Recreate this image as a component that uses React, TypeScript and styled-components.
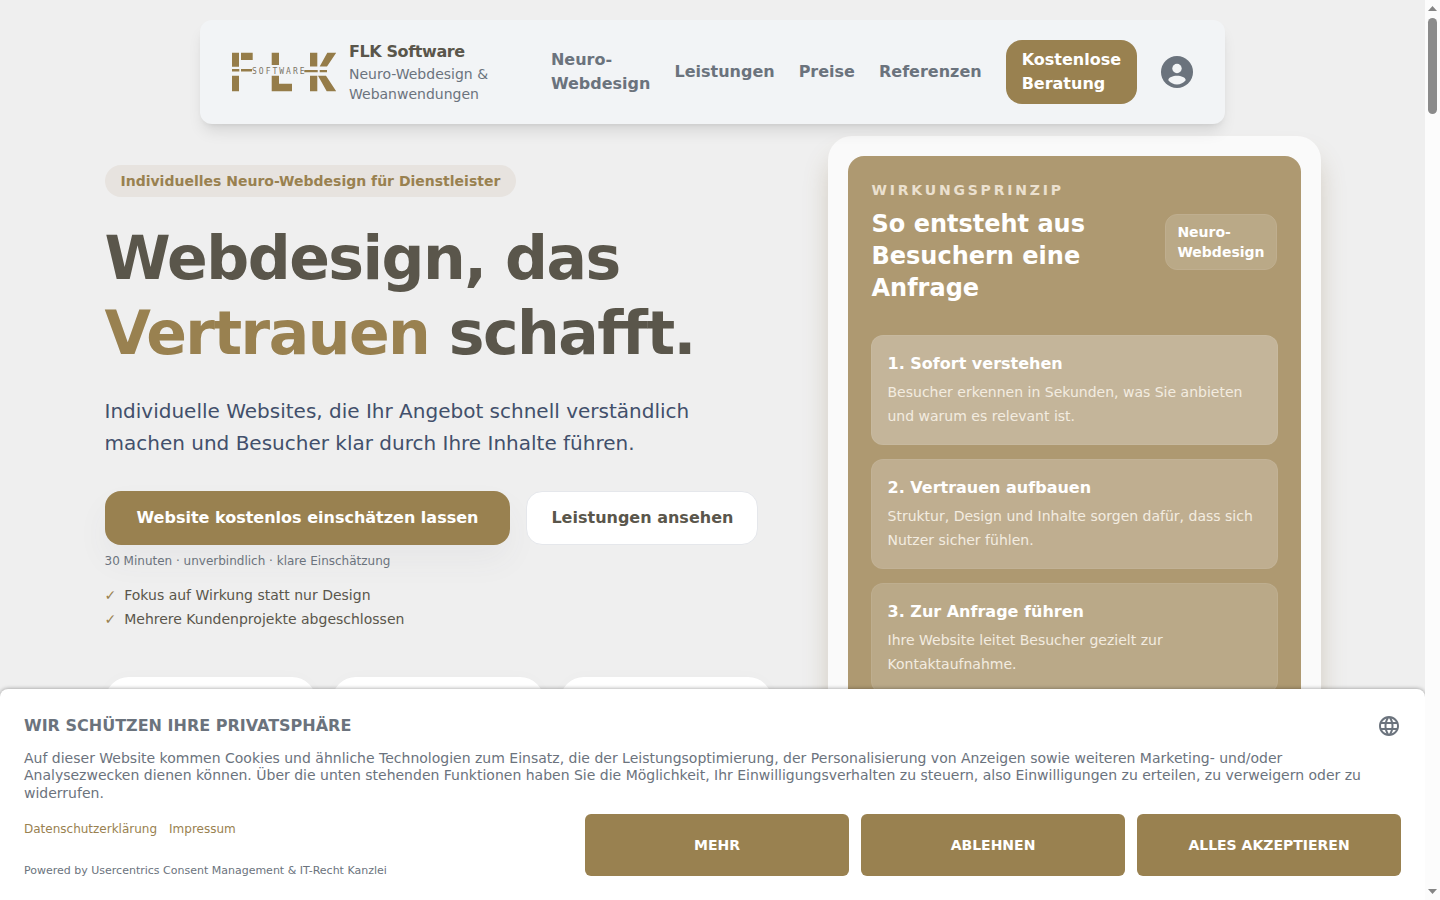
import React from "react";
import styled, { createGlobalStyle, css } from "styled-components";
import { MdLanguage } from "react-icons/md";

const gold = "#998150";
const ink = "#5a564b";
const slate = "#6b737d";

const GlobalStyle = createGlobalStyle`
  *, *::before, *::after { box-sizing: border-box; }
  body {
    margin: 0;
    background: #efefef;
    color: ${ink};
    font-family: "DejaVu Sans", sans-serif;
    font-size: 16px;
    line-height: 24px;
  }
  h1, h2, h3, p, ul { margin: 0; padding: 0; }
  a { color: inherit; text-decoration: none; }
  button { font: inherit; border: 0; cursor: pointer; }
`;

const Shell = styled.div`
  display: grid;
  grid-template-columns: minmax(0, 1fr) 15px;
  height: 100vh;
  overflow: hidden;
`;

const Page = styled.div`
  position: relative;
  height: 100vh;
  overflow: hidden;
`;

const Header = styled.header`
  position: relative;
  z-index: 2;
  display: flex;
  align-items: center;
  justify-content: space-between;
  margin: 20px 200px 0;
  padding: 20px 32px;
  border-radius: 12px;
  background: #f2f4f6;
  box-shadow: 0 10px 15px -3px rgba(0, 0, 0, 0.1), 0 4px 6px -4px rgba(0, 0, 0, 0.1);
`;

const Brand = styled.a`
  display: flex;
  align-items: center;
  gap: 12px;
`;

const BrandLogo = styled.svg`
  flex: none;
  width: 105px;
  height: 40px;
`;

const BrandName = styled.span`
  display: block;
  font-weight: 700;
  letter-spacing: -0.025em;
`;

const BrandClaim = styled.span`
  display: block;
  width: 160px;
  color: ${slate};
  font-size: 14px;
  line-height: 20px;
`;

const Nav = styled.nav`
  display: flex;
  align-items: center;
  gap: 24px;
  color: ${slate};
  font-weight: 600;
`;

const NavLink = styled.a<{ $narrow?: boolean }>`
  ${(p) => p.$narrow && css`width: min-content;`}
`;

const NavCta = styled.a`
  width: min-content;
  padding: 8px 16px;
  border-radius: 16px;
  background: ${gold};
  color: #fff;
`;

const AccountButton = styled.button`
  display: flex;
  padding: 0;
  background: none;
  color: ${slate};
  svg { width: 32px; height: 32px; }
`;

const Hero = styled.main`
  display: grid;
  grid-template-columns: minmax(0, 667fr) minmax(0, 493fr);
  gap: 56px;
  align-items: start;
  max-width: 1280px;
  margin: 0 auto;
  padding: 12px 32px 64px;
`;

const Intro = styled.section`
  padding-top: 29px;
`;

const Tag = styled.span`
  display: block;
  width: fit-content;
  padding: 6px 16px;
  border-radius: 16px;
  background: #e7e3df;
  color: ${gold};
  font-size: 14px;
  font-weight: 600;
  line-height: 20px;
`;

const Headline = styled.h1`
  margin-top: 24px;
  font-size: 60px;
  font-weight: 700;
  line-height: 75px;
  letter-spacing: -0.025em;
  em { color: ${gold}; font-style: normal; }
`;

const Lead = styled.p`
  max-width: 640px;
  margin-top: 24px;
  color: #42506b;
  font-size: 20px;
  line-height: 32px;
`;

const Actions = styled.div`
  display: flex;
  gap: 16px;
  margin-top: 32px;
`;

const ActionLink = styled.a<{ $primary?: boolean }>`
  padding: 14px 24px;
  border: 1px solid #e5e7eb;
  border-radius: 16px;
  background: #fff;
  font-weight: 600;
  ${(p) =>
    p.$primary &&
    css`
      padding: 15px 32px;
      border: 0;
      background: ${gold};
      color: #fff;
      box-shadow: 0 16px 32px rgba(80, 80, 100, 0.05);
    `}
`;

const Note = styled.p`
  margin-top: 8px;
  color: ${slate};
  font-size: 12px;
  line-height: 16px;
`;

const CheckList = styled.ul`
  display: grid;
  gap: 4px;
  margin-top: 16px;
  font-size: 14px;
  line-height: 20px;
  list-style: none;
`;

const CheckItem = styled.li`
  display: flex;
  gap: 8px;
  &::before { content: "✓"; color: ${gold}; }
`;

const Facts = styled.div`
  display: grid;
  grid-template-columns: repeat(3, 1fr);
  gap: 16px;
  margin-top: 48px;
`;

const FactCard = styled.div`
  min-height: 120px;
  border-radius: 24px;
  background: #fff;
  box-shadow: 0 0 16px rgba(0, 0, 0, 0.02);
`;

const Frame = styled.aside`
  padding: 20px;
  border-radius: 24px;
  background: #fafafa;
  box-shadow: 0 20px 24px rgba(130, 105, 60, 0.25);
`;

const Panel = styled.div`
  min-height: 640px;
  padding: 24px 23px;
  border-radius: 16px;
  background: #ae9971;
  color: #fff;
`;

const PanelHead = styled.div`
  display: flex;
  align-items: center;
  justify-content: space-between;
  gap: 16px;
  padding: 0 1px;
`;

const Eyebrow = styled.p`
  color: #ebe0cf;
  font-size: 14px;
  font-weight: 600;
  line-height: 20px;
  letter-spacing: 0.2em;
  text-transform: uppercase;
`;

const PanelTitle = styled.h2`
  max-width: 260px;
  margin-top: 8px;
  font-size: 24px;
  font-weight: 700;
  line-height: 32px;
`;

const PanelTag = styled.span`
  width: min-content;
  padding: 7px 11px;
  border: 1px solid #bfae8f;
  border-radius: 12px;
  background: #baa987;
  font-size: 14px;
  font-weight: 600;
  line-height: 20px;
`;

const Steps = styled.div`
  display: grid;
  gap: 14px;
  margin-top: 31px;
`;

const Step = styled.article<{ $fill: string }>`
  padding: 16px;
  border: 1px solid rgba(255, 255, 255, 0.06);
  border-radius: 12px;
  background: ${(p) => p.$fill};
`;

const StepTitle = styled.h3`
  font-size: 16px;
  font-weight: 600;
  line-height: 24px;
`;

const StepText = styled.p`
  margin-top: 4px;
  color: #f3ece0;
  font-size: 14px;
  line-height: 24px;
`;

const Consent = styled.section`
  position: absolute;
  right: 0;
  bottom: 0;
  left: 0;
  z-index: 5;
  padding: 24px;
  border-radius: 8px 8px 0 0;
  background: #fff;
  box-shadow: 0 0 4px rgba(0, 0, 0, 0.4);
  color: ${slate};
`;

const ConsentHead = styled.div`
  display: flex;
  align-items: center;
  justify-content: space-between;
`;

const ConsentTitle = styled.h2`
  font-size: 16px;
  font-weight: 700;
  line-height: 26px;
`;

const LanguageButton = styled.button`
  display: flex;
  padding: 0;
  background: none;
  color: ${slate};
  svg { width: 24px; height: 24px; }
`;

const ConsentText = styled.p`
  margin-top: 11px;
  font-size: 14px;
  line-height: 1.25;
`;

const ConsentFoot = styled.div`
  display: flex;
  justify-content: space-between;
  margin-top: 12px;
`;

const LegalColumn = styled.div`
  display: flex;
  flex-direction: column;
  justify-content: space-between;
  padding-top: 7px;
`;

const LegalLinks = styled.div`
  display: flex;
  gap: 12px;
  color: ${gold};
  font-size: 12px;
  line-height: 16px;
`;

const Powered = styled.p`
  font-size: 11px;
  line-height: 10px;
`;

const ConsentActions = styled.div`
  display: grid;
  grid-template-columns: repeat(3, 264px);
  gap: 12px;
`;

const ConsentButton = styled.button`
  height: 62px;
  border-radius: 6px;
  background: ${gold};
  color: #fff;
  font-size: 14px;
  font-weight: 700;
`;

const ScrollTrack = styled.div`
  display: flex;
  flex-direction: column;
  align-items: center;
  justify-content: space-between;
  padding: 6px 0;
  background: #fcfcfc;
`;

const ScrollTop = styled.div`
  display: grid;
  justify-items: center;
  gap: 7px;
`;

const Arrow = styled.svg`
  display: block;
  width: 9px;
  height: 5px;
  fill: #858585;
`;

const Thumb = styled.div`
  width: 9px;
  height: 96px;
  border-radius: 5px;
  background: #8b8b8b;
`;

const steps = [
  {
    title: "1. Sofort verstehen",
    text: "Besucher erkennen in Sekunden, was Sie anbieten und warum es relevant ist.",
    fill: "#c4b59a",
  },
  {
    title: "2. Vertrauen aufbauen",
    text: "Struktur, Design und Inhalte sorgen dafür, dass sich Nutzer sicher fühlen.",
    fill: "#bfae90",
  },
  {
    title: "3. Zur Anfrage führen",
    text: "Ihre Website leitet Besucher gezielt zur Kontaktaufnahme.",
    fill: "#baa988",
  },
];

const checks = ["Fokus auf Wirkung statt nur Design", "Mehrere Kundenprojekte abgeschlossen"];
const facts = ["a", "b", "c"];

function Logo() {
  return (
    <BrandLogo viewBox="0 0 105 40" role="img" aria-label="FLK Software">
      <g fill="#957c49">
        <path d="M0 .7h7v14H0zM9 .7h11.700v7.300H9zM0 17h7.300v2.500H0zM9 17h11v2.500H9zM0 23.700h7v15.600H0z" />
        <path d="M39.700 .7H47V13h-7.300zM39.700 23.700H47v8h13v7.600H39.700z" />
        <path d="M78 .7h7.300v13.800H78zM72.300 18h13.400v2.200H72.300zM87.700 18H95v2.200h-7.300zM78 23.700h7.300v15.600H78zM95.300 .7h8.900L95 14.500h-7.300zM86 23.700h8l10.200 15.600h-9.500z" />
      </g>
      <text x="20" y="22" fill="#7d7466" fontFamily="DejaVu Sans Mono, monospace" fontSize="8" letterSpacing="2">
        SOFTWARE
      </text>
    </BrandLogo>
  );
}

function AccountIcon() {
  return (
    <svg viewBox="0 0 32 32" aria-hidden="true">
      <circle cx="16" cy="16" r="16" fill="currentColor" />
      <circle cx="16" cy="12.500" r="4.700" fill="#f2f4f6" />
      <path d="M7.300 24.200c0-2.700 4.600-4.400 8.700-4.400s8.700 1.700 8.700 4.400c-2 2.700-5.300 4.200-8.700 4.200s-6.700-1.500-8.700-4.200z" fill="#f2f4f6" />
    </svg>
  );
}

export default function App() {
  return (
    <>
      <GlobalStyle />
      <Shell>
        <Page>
          <Header>
            <Brand href="#">
              <Logo />
              <span>
                <BrandName>FLK Software</BrandName>
                <BrandClaim>Neuro-Webdesign &amp; Webanwendungen</BrandClaim>
              </span>
            </Brand>
            <Nav>
              <NavLink href="#neuro" $narrow>Neuro-Webdesign</NavLink>
              <NavLink href="#leistungen">Leistungen</NavLink>
              <NavLink href="#preise">Preise</NavLink>
              <NavLink href="#referenzen">Referenzen</NavLink>
              <NavCta href="#beratung">Kostenlose Beratung</NavCta>
              <AccountButton type="button" aria-label="Konto">
                <AccountIcon />
              </AccountButton>
            </Nav>
          </Header>

          <Hero>
            <Intro>
              <Tag>Individuelles Neuro-Webdesign für Dienstleister</Tag>
              <Headline>
                Webdesign, das <em>Vertrauen</em> schafft.
              </Headline>
              <Lead>
                Individuelle Websites, die Ihr Angebot schnell verständlich machen und Besucher klar
                durch Ihre Inhalte führen.
              </Lead>
              <Actions>
                <ActionLink href="#einschaetzung" $primary>Website kostenlos einschätzen lassen</ActionLink>
                <ActionLink href="#leistungen">Leistungen ansehen</ActionLink>
              </Actions>
              <Note>30 Minuten · unverbindlich · klare Einschätzung</Note>
              <CheckList>
                {checks.map((c) => (
                  <CheckItem key={c}>{c}</CheckItem>
                ))}
              </CheckList>
              <Facts>
                {facts.map((f) => (
                  <FactCard key={f} />
                ))}
              </Facts>
            </Intro>

            <Frame>
              <Panel>
                <PanelHead>
                  <div>
                    <Eyebrow>Wirkungsprinzip</Eyebrow>
                    <PanelTitle>So entsteht aus Besuchern eine Anfrage</PanelTitle>
                  </div>
                  <PanelTag>Neuro-Webdesign</PanelTag>
                </PanelHead>
                <Steps>
                  {steps.map((s) => (
                    <Step key={s.title} $fill={s.fill}>
                      <StepTitle>{s.title}</StepTitle>
                      <StepText>{s.text}</StepText>
                    </Step>
                  ))}
                </Steps>
              </Panel>
            </Frame>
          </Hero>

          <Consent aria-labelledby="consent-title">
            <ConsentHead>
              <ConsentTitle id="consent-title">WIR SCHÜTZEN IHRE PRIVATSPHÄRE</ConsentTitle>
              <LanguageButton type="button" aria-label="Sprache wählen">
                <MdLanguage />
              </LanguageButton>
            </ConsentHead>
            <ConsentText>
              Auf dieser Website kommen Cookies und ähnliche Technologien zum Einsatz, die der
              Leistungsoptimierung, der Personalisierung von Anzeigen sowie weiteren Marketing-
              und/oder Analysezwecken dienen können. Über die unten stehenden Funktionen haben Sie
              die Möglichkeit, Ihr Einwilligungsverhalten zu steuern, also Einwilligungen zu
              erteilen, zu verweigern oder zu widerrufen.
            </ConsentText>
            <ConsentFoot>
              <LegalColumn>
                <LegalLinks>
                  <a href="#datenschutz">Datenschutzerklärung</a>
                  <a href="#impressum">Impressum</a>
                </LegalLinks>
                <Powered>
                  Powered by <a href="#usercentrics">Usercentrics Consent Management</a> &amp;{" "}
                  <a href="#kanzlei">IT-Recht Kanzlei</a>
                </Powered>
              </LegalColumn>
              <ConsentActions>
                <ConsentButton type="button">MEHR</ConsentButton>
                <ConsentButton type="button">ABLEHNEN</ConsentButton>
                <ConsentButton type="button">ALLES AKZEPTIEREN</ConsentButton>
              </ConsentActions>
            </ConsentFoot>
          </Consent>
        </Page>

        <ScrollTrack aria-hidden="true">
          <ScrollTop>
            <Arrow viewBox="0 0 9 5"><path d="M0 5 4.500 0 9 5z" /></Arrow>
            <Thumb />
          </ScrollTop>
          <Arrow viewBox="0 0 9 5"><path d="M0 0h9L4.500 5z" /></Arrow>
        </ScrollTrack>
      </Shell>
    </>
  );
}
